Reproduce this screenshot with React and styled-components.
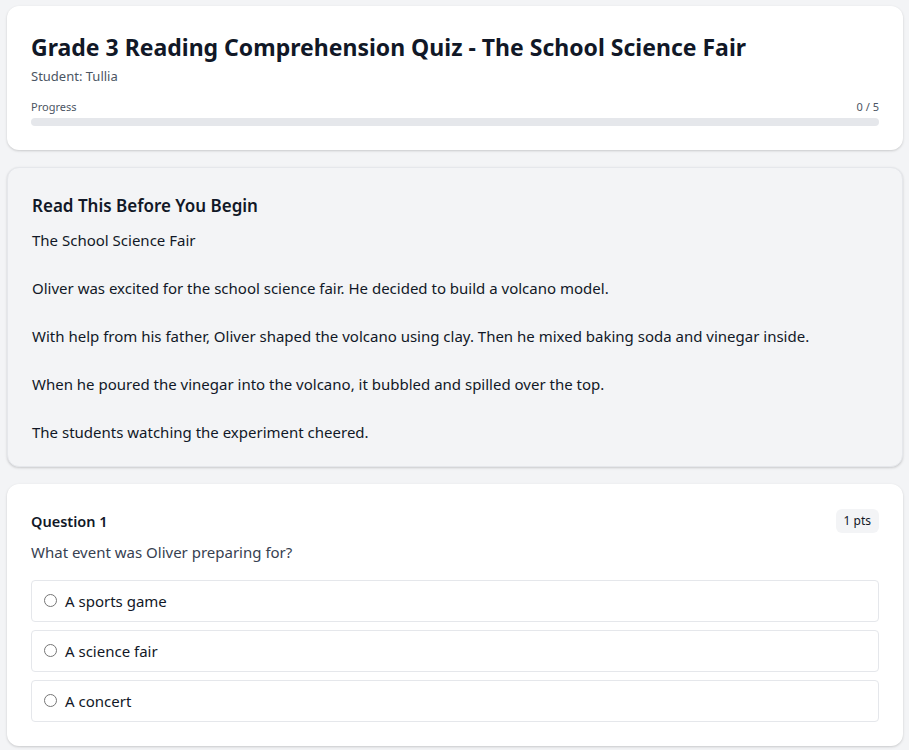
import React from "react";
import styled, { createGlobalStyle } from "styled-components";

const Global = createGlobalStyle`
  html, body { margin: 0; padding: 0; background: #f3f4f6; }
  body { font-family: "Segoe UI", "Noto Sans", sans-serif; color: #111827; }
  * { box-sizing: border-box; }
`;

const Page = styled.div`
  padding: 6px 6px 6px 7px;
  display: flex;
  flex-direction: column;
  gap: 17px;
`;

const Card = styled.section`
  background: #ffffff;
  border-radius: 12px;
  box-shadow: 0 1px 3px rgba(0,0,0,0.12), 0 1px 2px rgba(0,0,0,0.06);
  padding: 25px 24px 24px;
`;

const PassageCard = styled.section`
  background: #f3f4f6;
  border: 1px solid #e5e7eb;
  border-radius: 12px;
  box-shadow: 0 1px 3px rgba(0,0,0,0.12), 0 1px 2px rgba(0,0,0,0.06);
  padding: 24px 24px 22px;
`;

const Title = styled.h1`
  margin: 0;
  font-size: 23px;
  font-weight: 700;
  line-height: 32px;
  color: #111827;
`;

const Sub = styled.div`
  font-size: 13px;
  color: #4b5563;
  margin-top: 3px;
  line-height: 20px;
`;

const ProgressHead = styled.div`
  display: flex;
  justify-content: space-between;
  font-size: 11px;
  color: #4b5563;
  margin-top: 13px;
  line-height: 16px;
`;

const Track = styled.div`
  margin-top: 3px;
  height: 8px;
  border-radius: 999px;
  background: #e5e7eb;
  overflow: hidden;
`;

const Fill = styled.div`
  height: 100%;
  background: #3b82f6;
`;

const SectionTitle = styled.h2`
  margin: 0 0 8px;
  font-size: 17px;
  font-weight: 600;
  line-height: 28px;
`;

const Passage = styled.div`
  white-space: pre-wrap;
  font-size: 15px;
  line-height: 24px;
  color: #111827;
`;

const QHead = styled.div`
  display: flex;
  justify-content: space-between;
  align-items: center;
`;

const QLabel = styled.div`
  font-size: 14.5px;
  font-weight: 600;
`;

const Badge = styled.span`
  background: #f3f4f6;
  border-radius: 6px;
  padding: 4px 8px;
  font-size: 12px;
  line-height: 16px;
  color: #111827;
`;

const QText = styled.p`
  margin: 7px 0 16px;
  font-size: 15px;
  line-height: 24px;
  color: #374151;
`;

const Options = styled.div`
  display: flex;
  flex-direction: column;
  gap: 8px;
`;

const Option = styled.label`
  display: flex;
  align-items: center;
  gap: 8px;
  border: 1px solid #e5e7eb;
  border-radius: 4px;
  padding: 0 12px;
  height: 42px;
  font-size: 15px;
  color: #111827;
  cursor: pointer;
`;

const Radio = styled.input`
  margin: 0;
  width: 13px;
  height: 13px;
  position: relative;
  top: -1px;
`;

const passage = `The School Science Fair

Oliver was excited for the school science fair. He decided to build a volcano model.

With help from his father, Oliver shaped the volcano using clay. Then he mixed baking soda and vinegar inside.

When he poured the vinegar into the volcano, it bubbled and spilled over the top.

The students watching the experiment cheered.`;

const options = ["A sports game", "A science fair", "A concert"];

export default function App() {
  const answered = 0;
  const total = 5;
  return (
    <>
      <Global />
      <Page>
        <Card>
          <Title>Grade 3 Reading Comprehension Quiz - The School Science Fair</Title>
          <Sub>Student: Tullia</Sub>
          <ProgressHead>
            <span>Progress</span>
            <span>{answered} / {total}</span>
          </ProgressHead>
          <Track>
            <Fill style={{ width: `${(answered / total) * 100}%` }} />
          </Track>
        </Card>
        <PassageCard>
          <SectionTitle>Read This Before You Begin</SectionTitle>
          <Passage>{passage}</Passage>
        </PassageCard>
        <Card>
          <QHead>
            <QLabel>Question 1</QLabel>
            <Badge>1 pts</Badge>
          </QHead>
          <QText>What event was Oliver preparing for?</QText>
          <Options>
            {options.map((o) => (
              <Option key={o}>
                <Radio type="radio" name="q1" />
                <span>{o}</span>
              </Option>
            ))}
          </Options>
        </Card>
      </Page>
    </>
  );
}
